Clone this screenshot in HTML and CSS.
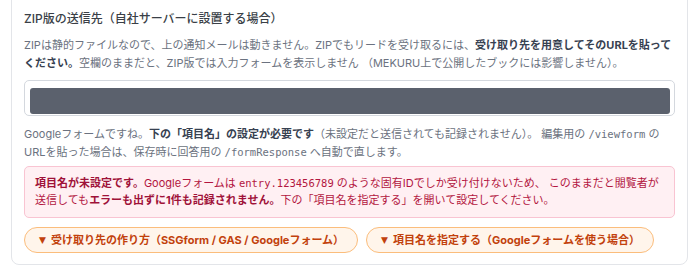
FILE: index.html
```html
<!DOCTYPE html>
<html lang="ja">
<head>
<meta charset="utf-8">
<link rel="stylesheet" href="styles.css">
</head>
<body>
<section class="card">
  <h3 class="title">ZIP版の送信先（自社サーバーに設置する場合）</h3>
  <p class="desc">ZIPは静的ファイルなので、上の通知メールは動きません。ZIPでもリードを受け取るには、<b>受け取り先を用意してそのURLを貼ってください。</b>空欄のままだと、ZIP版では入力フォームを表示しません （MEKURU上で公開したブックには影響しません）。</p>
  <div class="field"><div class="field-fill"></div></div>
  <p class="desc note">Googleフォームですね。<b>下の「項目名」の設定が必要です</b>（未設定だと送信されても記録されません）。 編集用の <code>/viewform</code> の URLを貼った場合は、保存時に回答用の <code>/formResponse</code> へ自動で直します。</p>
  <div class="alert"><b>項目名が未設定です。</b>Googleフォームは <code>entry.123456789</code> のような固有IDでしか受け付けないため、 このままだと閲覧者が送信しても<b>エラーも出ずに1件も記録されません。</b>下の「項目名を指定する」を開いて設定してください。</div>
  <div class="actions">
    <button class="pill"><span class="tri">▼</span>受け取り先の作り方（SSGform / GAS / Googleフォーム）</button>
    <button class="pill"><span class="tri">▼</span>項目名を指定する（Googleフォームを使う場合）</button>
  </div>
</section>
</body>
</html>
```
FILE: styles.css
```css
html, body {
  margin: 0;
  padding: 0;
  background: #ffffff;
}
body {
  font-family: "Inter", "Noto Sans CJK JP", sans-serif;
  overflow: hidden;
}
.card {
  box-sizing: border-box;
  width: 677px;
  margin: -20px 0 0 11px;
  padding: 28px 12px 11px 12px;
  border: 1px solid #e3e5e9;
  border-radius: 8px;
  background: #fff;
}
.title {
  margin: 0;
  font-size: 12px;
  line-height: 20px;
  font-weight: 500;
  color: #3a3f47;
}
.desc {
  margin: 7px 0 8px;
  font-size: 11px;
  line-height: 18px;
  color: #6b7280;
}
.desc b {
  color: #374151;
  font-weight: 700;
}
code {
  font-family: "DejaVu Sans Mono", monospace;
  font-size: 10.5px;
}
.field {
  box-sizing: border-box;
  height: 36px;
  border: 1px solid #d4d8de;
  border-radius: 5px;
  padding: 7px 4px 1px 5px;
}
.field-fill {
  height: 26px;
  background: #5b616d;
  border-radius: 3px;
}
.note {
  margin: 9px 0 5px;
}
.alert {
  box-sizing: border-box;
  padding: 8px 12px 8px 10px;
  border: 1px solid #f9c4d2;
  border-radius: 5px;
  background: #fff0f3;
  color: #b3163f;
  font-size: 11px;
  line-height: 17px;
}
.alert b {
  color: #9f1239;
  font-weight: 700;
}
.alert code {
  color: #b3163f;
}
.actions {
  display: flex;
  gap: 8px;
  margin-top: 9px;
}
.pill {
  box-sizing: border-box;
  height: 26px;
  padding: 0 13px 0 14px;
  border: 1px solid #fbbd7c;
  border-radius: 13px;
  background: #fff5eb;
  color: #c2410c;
  font-family: "Inter", "Noto Sans CJK JP", sans-serif;
  font-size: 11px;
  font-weight: 700;
  line-height: 24px;
  white-space: nowrap;
}
.tri {
  display: inline-block;
  font-family: "DejaVu Sans", sans-serif;
  font-size: 9px;
  margin-right: 5px;
  vertical-align: top;
}
```
